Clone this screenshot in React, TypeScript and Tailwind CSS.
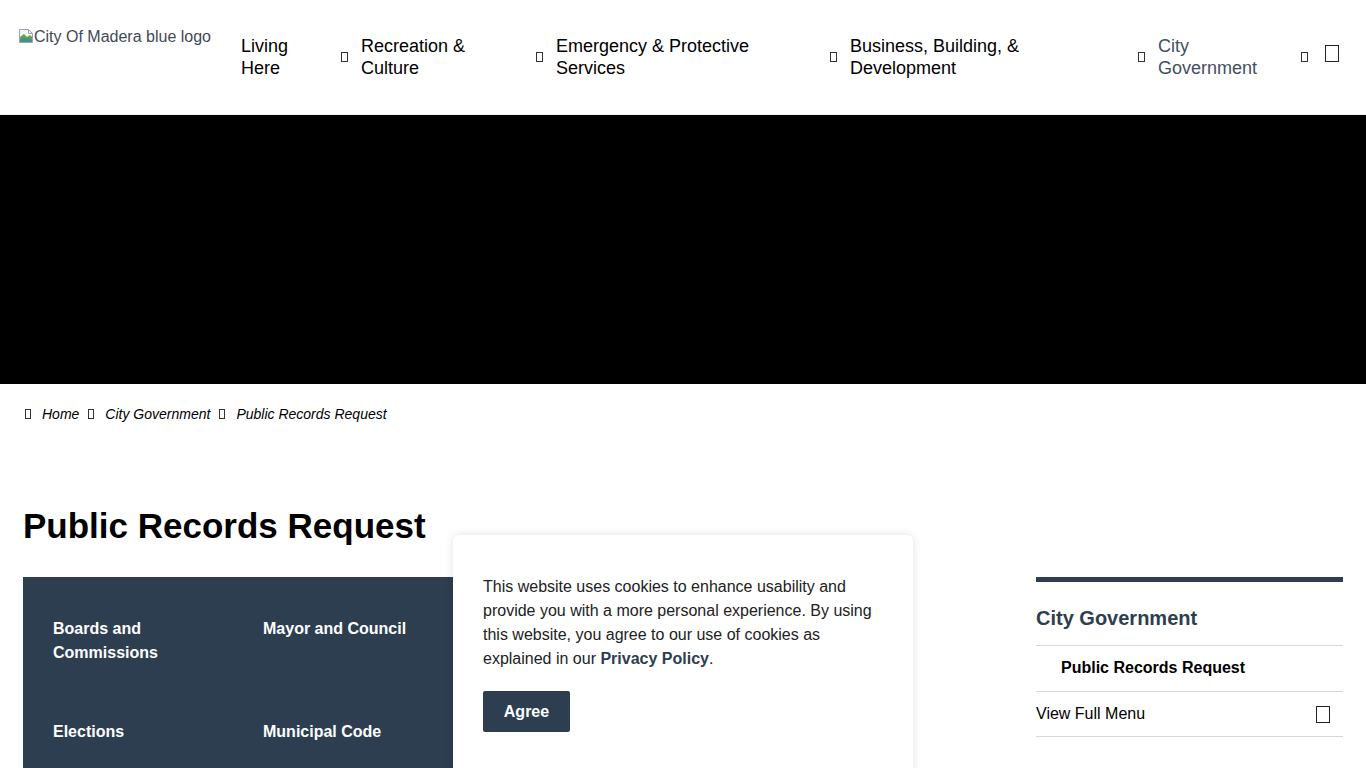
import React from 'react';

// missing-glyph boxes, as the icon font failed to load in the reference
function Tofu({ size = 'sm' }: { size?: 'sm' | 'lg' }) {
  if (size === 'lg') {
    return <span className="inline-block w-[14px] h-[17px] border border-[#222] shrink-0" />;
  }
  return <span className="inline-block w-[7px] h-[10px] border border-[#333] shrink-0" />;
}

function BrokenImage() {
  return (
    <svg width="16" height="16" viewBox="0 0 16 16" className="shrink-0">
      <path d="M1.5 1.5h9l4 4v9h-13z" fill="#f4f6f8" stroke="#9aa4ae" />
      <path d="M10.5 1.5v4h4" fill="none" stroke="#9aa4ae" />
      <path d="M2 9l4-3 3 3 3-2 2 2v5H2z" fill="#5aa646" />
      <path d="M2 12l4-2 6 1 2 1v2H2z" fill="#3b7fc4" opacity="0.6" />
    </svg>
  );
}

const nav = [
  { lines: ['Living', 'Here'], w: 'w-[100px]' },
  { lines: ['Recreation &', 'Culture'], w: 'w-[175px]' },
  { lines: ['Emergency & Protective', 'Services'], w: 'w-[274px]' },
  { lines: ['Business, Building, &', 'Development'], w: 'w-[288px]' },
];

const crumbs = ['Home', 'City Government', 'Public Records Request'];

export default function App() {
  return (
    <div className="relative h-[768px] overflow-hidden bg-white text-black font-['Liberation_Sans',Arial,sans-serif]">
      {/* Header */}
      <header className="h-[115px] border-b border-[#f0f0f0] flex items-center pl-[18px]">
        <div className="self-start mt-[28px] w-[223px] flex items-start text-[16px] leading-[18px] text-[#3f4a56]">
          <BrokenImage />
          <span>City Of Madera blue logo</span>
        </div>
        <nav className="flex items-center">
          {nav.map((item) => (
            <div key={item.lines[0]} className="flex items-center mr-[13px]">
              <span className={`${item.w} text-[18px] leading-[22px]`}>
                {item.lines[0]}
                <br />
                {item.lines[1]}
              </span>
              <Tofu />
            </div>
          ))}
          <div className="flex items-center">
            <span className="w-[143px] text-[18px] leading-[22px] text-[#404f63]">
              City
              <br />
              Government
            </span>
            <Tofu />
          </div>
          <div className="ml-[17px]">
            <Tofu size="lg" />
          </div>
        </nav>
      </header>

      {/* Hero */}
      <div className="h-[269px] bg-black" />

      {/* Breadcrumb */}
      <div className="flex items-center gap-[9px] pl-[25px] pt-[22px] text-[14px] leading-[16px] italic">
        {crumbs.map((c) => (
          <React.Fragment key={c}>
            <span className="inline-block w-[6px] h-[10px] border border-[#333] mr-[2px]" />
            <span>{c}</span>
          </React.Fragment>
        ))}
      </div>

      {/* Content */}
      <div className="px-[23px]">
        <h1 className="mt-[84px] text-[35px] leading-[40px] font-bold">Public Records Request</h1>

        <div className="mt-[31px] flex gap-[36px]">
          <div className="flex-1">
            <div className="w-[480px] h-[200px] bg-[#2d3e50] pt-[40px] px-[30px] grid grid-cols-2 gap-y-[55px] content-start text-[16px] leading-[24px] font-bold text-white">
              <span className="w-[140px]">Boards and Commissions</span>
              <span>Mayor and Council</span>
              <span>Elections</span>
              <span>Municipal Code</span>
            </div>
          </div>

          <aside className="w-[307px] border-t-[5px] border-[#2d3e50]">
            <div className="pt-[24px] pb-[15px] text-[20px] leading-[24px] font-bold text-[#2d3e50] border-b border-[#d6d6d6]">
              City Government
            </div>
            <div className="pl-[25px] pt-[10px] pb-[12px] text-[16px] leading-[23px] font-bold border-b border-[#d6d6d6]">
              Public Records Request
            </div>
            <div className="flex items-center justify-between pr-[13px] py-[11px] text-[16px] leading-[22px] border-b border-[#d6d6d6]">
              <span>View Full Menu</span>
              <Tofu size="lg" />
            </div>
          </aside>
        </div>
      </div>

      {/* Cookie popup */}
      <div className="absolute left-[453px] top-[535px] w-[460px] h-[260px] bg-white rounded-[6px] shadow-[0_0_10px_rgba(0,0,0,0.12)] pl-[30px] pr-[28px] pt-[40px]">
        <p className="text-[16px] leading-[24px] text-[#222]">
          This website uses cookies to enhance usability and provide you with a more personal experience. By using this website, you agree to our use of cookies as explained in our{' '}
          <span className="font-bold text-[#2d3e50]">Privacy Policy</span>.
        </p>
        <button className="mt-[20px] w-[87px] h-[41px] bg-[#2d3e50] rounded-[2px] text-white font-bold text-[16px]">
          Agree
        </button>
      </div>
    </div>
  );
}
